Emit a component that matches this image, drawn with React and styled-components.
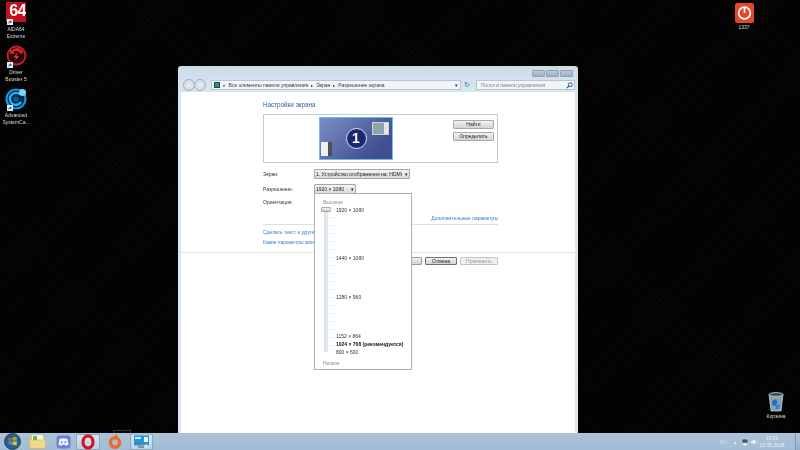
import React from 'react'
import styled, {createGlobalStyle} from 'styled-components'

const GlobalStyle = createGlobalStyle`
  html, body { margin: 0; padding: 0; background: #000; }
  body { font-family: "Liberation Sans", Arial, sans-serif; }
`

const Shortcut = () => (
  <svg width="6" height="6" viewBox="0 0 8 8" style={{position: 'absolute', left: 2, bottom: 0}}>
    <rect width="8" height="8" fill="#e8eef4" />
    <path d="M2 6.5V4.5Q2 3 4 3V1.5L6.8 3.8 4 6V4.5Q3 4.5 2 6.5Z" fill="#2a62c4" />
  </svg>
)

const Booster = () => (
  <svg width="21" height="21" viewBox="0 0 21 21">
    <circle cx="10.5" cy="10.5" r="9" fill="#2a0708" stroke="#c42227" strokeWidth="1.8" />
    <path d="M10.5 3a7.5 7.5 0 0 1 7 5l-3 1a4.5 4.5 0 0 0-7-2l1.8 1.8H4V4l1.8 1.8A7.5 7.5 0 0 1 10.5 3Z" fill="#d3262b" />
    <path d="M13 11l-4 5 1-3.5H7.5l4-5-1 3.5Z" fill="#e5353a" />
  </svg>
)

const SystemCare = () => (
  <svg width="22" height="22" viewBox="0 0 22 22">
    <circle cx="11" cy="11" r="9.5" fill="#04273f" stroke="#1598e2" strokeWidth="2.2" />
    <path d="M15 6.5A6 6 0 1 0 16 14" fill="none" stroke="#1fb4f5" strokeWidth="2.4" />
    <circle cx="11" cy="11" r="2.6" fill="#0c5f96" />
    <circle cx="17.5" cy="4.5" r="3.5" fill="#7bd4fb" />
  </svg>
)

const Power = () => (
  <svg width="19" height="20" viewBox="0 0 19 20">
    <rect width="19" height="20" rx="2" fill="#e2492b" />
    <circle cx="9.5" cy="10" r="5.8" fill="none" stroke="#fff" strokeWidth="1.7" />
    <path d="M9.5 4v6" stroke="#fff" strokeWidth="1.7" />
  </svg>
)

const Trash = () => (
  <svg width="16" height="20" viewBox="0 0 16 20">
    <path d="M1 2.5 3 19h10l2-16.5Z" fill="#8aa0ae" stroke="#c9d6dc" strokeWidth=".7" />
    <ellipse cx="8" cy="2.5" rx="7" ry="2" fill="#42525c" stroke="#d4dfe4" strokeWidth=".7" />
    <path d="M4 9l4-2 1.5 3-2 4-3-1Z" fill="#1f6fd0" />
    <path d="M9 12l3 1-1 4H7Z" fill="#2a86e6" />
  </svg>
)

const Orb = () => (
  <svg width="17" height="17" viewBox="0 0 17 17">
    <circle cx="8.5" cy="8.5" r="8" fill="#24608f" stroke="#163a57" strokeWidth=".8" />
    <path d="M3.8 5.5l4-1v3.4H4.4Z" fill="#e5472f" />
    <path d="M8.5 4.3l4-.6.5 3.9H8.5Z" fill="#73c13f" />
    <path d="M4.4 8.6h3.4v3.6l-3-1Z" fill="#3b95e0" />
    <path d="M8.5 8.4H13l-.4 4-4.1-.6Z" fill="#f3c02d" />
  </svg>
)

const Folder = () => (
  <svg width="17" height="15" viewBox="0 0 17 15">
    <path d="M1 2h5l1 1.5h9V14H1Z" fill="#e8c76a" />
    <rect x="3" y="1" width="11" height="8" fill="#f4f3e8" />
    <rect x="4" y="2" width="4" height="4" fill="#79b34e" />
    <path d="M0 6h17l-1 8.5H1Z" fill="#f0d88c" stroke="#c9a850" strokeWidth=".5" />
  </svg>
)

const Discord = () => (
  <svg width="15" height="14" viewBox="0 0 15 14">
    <rect x=".5" y=".5" width="14" height="13" rx="3" fill="#6f7fd8" />
    <path d="M3.5 4Q7.5 2.3 11.5 4L12.5 9.5Q11 10.7 9.7 10.8L9 9.8H6L5.3 10.8Q4 10.7 2.5 9.5Z" fill="#f2f4ff" />
    <circle cx="5.7" cy="7.2" r="1" fill="#6f7fd8" />
    <circle cx="9.3" cy="7.2" r="1" fill="#6f7fd8" />
  </svg>
)

const Opera = () => (
  <svg width="14" height="16" viewBox="0 0 14 16">
    <ellipse cx="7" cy="8" rx="5" ry="6" fill="none" stroke="#d5101f" strokeWidth="3.2" />
  </svg>
)

const Origin = () => (
  <svg width="14" height="16" viewBox="0 0 14 16">
    <circle cx="7" cy="8.5" r="4.6" fill="none" stroke="#ee6a27" strokeWidth="3.4" />
    <path d="M8 0 10 3 6 3Z" fill="#ee6a27" />
  </svg>
)

const DisplayIcon = () => (
  <svg width="17" height="15" viewBox="0 0 17 15">
    <rect x=".5" y="1" width="16" height="11" fill="#2a93d2" stroke="#dcebf4" strokeWidth=".8" />
    <rect x="2" y="3" width="6" height="2" fill="#c8ebff" />
    <rect x="11" y="3" width="4" height="5" fill="#e9f4fa" />
    <rect x="5" y="12" width="7" height="2" fill="#8a9298" />
    <circle cx="13" cy="12.5" r="2" fill="#dfe3e5" />
  </svg>
)

const App = () => {
  return (
    <>
      <GlobalStyle />
      <Screen>
        <Desktop>
          <IconColumn>
            <DesktopIcon>
              <IconArt><AidaBox>64</AidaBox><Shortcut /></IconArt>
              <IconLabel>AIDA64<br />Extreme</IconLabel>
            </DesktopIcon>
            <DesktopIcon>
              <IconArt><Booster /><Shortcut /></IconArt>
              <IconLabel>Driver<br />Booster 5</IconLabel>
            </DesktopIcon>
            <DesktopIcon>
              <IconArt><SystemCare /><Shortcut /></IconArt>
              <IconLabel>Advanced<br />SystemCa...</IconLabel>
            </DesktopIcon>
          </IconColumn>

          <FreeIcon $x={724} $y={3}>
            <Power />
            <IconLabel>1337</IconLabel>
          </FreeIcon>
          <FreeIcon $x={756} $y={392}>
            <Trash />
            <IconLabel>Корзина</IconLabel>
          </FreeIcon>

          <Explorer>
            <TitleBar>
              <WinButton /><WinButton /><WinButton />
            </TitleBar>
            <NavBar>
              <NavButtons>
                <NavCircle /><NavCircle />
              </NavButtons>
              <AddressBox>
                <AddressIcon />
                <Crumb>«</Crumb>
                <Crumb>Все элементы панели управления</Crumb>
                <Crumb $sep>▸</Crumb>
                <Crumb>Экран</Crumb>
                <Crumb $sep>▸</Crumb>
                <Crumb>Разрешение экрана</Crumb>
                <AddressArrow>▾</AddressArrow>
              </AddressBox>
              <Refresh>↻</Refresh>
              <SearchBox>
                <span>Поиск в панели управления</span>
                <svg width="7" height="7" viewBox="0 0 7 7">
                  <circle cx="4.3" cy="2.7" r="2" fill="none" stroke="#2b5f9e" strokeWidth="1" />
                  <path d="M3 4 .8 6.2" stroke="#2b5f9e" strokeWidth="1.2" />
                </svg>
              </SearchBox>
            </NavBar>

            <Content>
              <MainColumn>
                <Heading>Настройки экрана</Heading>
                <PreviewBox>
                  <MonitorArea>
                    <Monitor>
                      <MiniTop />
                      <MiniBottom />
                      <Badge>1</Badge>
                    </Monitor>
                  </MonitorArea>
                  <PreviewButtons>
                    <PreviewButton>Найти</PreviewButton>
                    <PreviewButton>Определить</PreviewButton>
                  </PreviewButtons>
                </PreviewBox>

                <FormRow $mt={6}>
                  <FormLabel>Экран:</FormLabel>
                  <Select $w={96}>1. Устройство отображения на: HDMI<Caret>▾</Caret></Select>
                </FormRow>
                <FormRow $mt={5}>
                  <FormLabel>Разрешение:</FormLabel>
                  <SelectWrap>
                    <Select $w={42}>1920 × 1080<Caret>▾</Caret></Select>
                    <Dropdown>
                      <EdgeLabel>Высокое</EdgeLabel>
                      <SliderArea>
                        <Track />
                        <Thumb />
                        <Ticks />
                        <Options>
                          <Option $mt={0}>1920 × 1080</Option>
                          <Option $mt={42}>1440 × 1080</Option>
                          <Option $mt={33}>1280 × 960</Option>
                          <Option $mt={33}>1152 × 864</Option>
                          <Option $mt={2} $bold>1024 × 768 (рекомендуется)</Option>
                          <Option $mt={2}>800 × 600</Option>
                        </Options>
                      </SliderArea>
                      <EdgeLabel $bottom>Низкое</EdgeLabel>
                    </Dropdown>
                  </SelectWrap>
                </FormRow>
                <FormRow $mt={3}>
                  <FormLabel>Ориентация:</FormLabel>
                </FormRow>

                <AdvancedLink>Дополнительные параметры</AdvancedLink>
                <Divider />
                <TextLink>Сделать текст и другие элементы больше или меньше</TextLink>
                <TextLink $mt={4}>Какие параметры монитора следует выбрать?</TextLink>
              </MainColumn>
              <Footer>
                <FooterButton $w={37}>ОК</FooterButton>
                <FooterButton $w={32} $strong>Отмена</FooterButton>
                <FooterButton $w={38} $disabled>Применить</FooterButton>
              </Footer>
            </Content>
          </Explorer>
          <HoverEdge />
        </Desktop>

        <Taskbar>
          <OrbSlot><Orb /></OrbSlot>
          <TaskSlot $w={26}><Folder /></TaskSlot>
          <TaskSlot $w={26}><Discord /></TaskSlot>
          <TaskSlot $w={24} $active><Opera /></TaskSlot>
          <TaskSlot $w={30}><Origin /></TaskSlot>
          <TaskSlot $w={23} $active><DisplayIcon /></TaskSlot>
          <Tray>
            <TrayText>RU</TrayText>
            <TrayGlyph>▴</TrayGlyph>
            <svg width="8" height="8" viewBox="0 0 8 8">
              <rect x="1" y="1" width="6" height="4" fill="#3f5565" stroke="#dde6ec" strokeWidth=".6" />
              <rect x="2.5" y="5.5" width="3" height="2" fill="#eef2f5" />
            </svg>
            <svg width="8" height="8" viewBox="0 0 8 8">
              <path d="M1 3h1.5L5 1v6L2.5 5H1Z" fill="#eef2f5" />
              <path d="M6 2.5Q7.2 4 6 5.5" fill="none" stroke="#eef2f5" strokeWidth=".7" />
            </svg>
            <Clock>19:21<br />13.09.2018</Clock>
          </Tray>
          <ShowDesktop />
        </Taskbar>
      </Screen>
    </>
  )
}

export default App

const Screen = styled.div`
  width: 800px;
  height: 450px;
  display: flex;
  flex-direction: column;
  overflow: hidden;
  background-color: #020202;
  background-image: repeating-linear-gradient(45deg, #060606 0 1px, transparent 1px 4px),
    repeating-linear-gradient(-45deg, #050505 0 1px, transparent 1px 5px);
  filter: blur(0.5px);
`
const Desktop = styled.div`
  flex: 1;
  min-height: 0;
  position: relative;
`
const IconColumn = styled.div`
  display: flex;
  flex-direction: column;
  width: 32px;
  padding-top: 2px;
`
const DesktopIcon = styled.div`
  height: 43px;
  display: flex;
  flex-direction: column;
  align-items: center;
`
const IconArt = styled.div`
  position: relative;
  width: 22px;
  height: 23px;
  display: flex;
  align-items: flex-start;
  justify-content: center;
`
const AidaBox = styled.div`
  width: 20px;
  height: 20px;
  background: #c1121c;
  color: #fff;
  font-size: 16px;
  font-weight: bold;
  line-height: 17px;
  letter-spacing: -0.5px;
  text-align: right;
  overflow: hidden;
`
const IconLabel = styled.div`
  margin-top: 1px;
  color: #dcdcdc;
  font-size: 5px;
  line-height: 6.5px;
  text-align: center;
  white-space: nowrap;
`
const FreeIcon = styled.div`
  position: absolute;
  left: ${p => p.$x}px;
  top: ${p => p.$y}px;
  width: 40px;
  display: flex;
  flex-direction: column;
  align-items: center;
`
const Explorer = styled.div`
  position: absolute;
  left: 178px;
  top: 66px;
  width: 400px;
  height: 367px;
  box-sizing: border-box;
  padding: 0 3px;
  display: flex;
  flex-direction: column;
  background: linear-gradient(#cbdce9, #d9e6f0 26px, #dde8f2);
  border-radius: 3px 3px 0 0;
`
const TitleBar = styled.div`
  height: 12px;
  display: flex;
  justify-content: flex-end;
  align-items: center;
  gap: 1px;
  padding: 3px 2px 0 0;
  box-sizing: border-box;
`
const WinButton = styled.div`
  width: 11px;
  height: 5px;
  border-radius: 1px;
  background: linear-gradient(#bccad6, #9dafbe);
  border: 1px solid #8fa2b1;
`
const NavBar = styled.div`
  height: 14px;
  display: flex;
  align-items: center;
`
const NavButtons = styled.div`
  width: 26px;
  display: flex;
  padding-left: 2px;
  box-sizing: border-box;
`
const NavCircle = styled.div`
  width: 10px;
  height: 10px;
  margin-right: -1px;
  border-radius: 50%;
  border: 1px solid #9fafbc;
  background: radial-gradient(#e8eef2, #cdd7df);
`
const AddressBox = styled.div`
  width: 252px;
  height: 10px;
  box-sizing: border-box;
  margin-left: 4px;
  padding: 0 2px;
  display: flex;
  align-items: center;
  gap: 3px;
  background: #f0f5f9;
  border: 1px solid #b7c5d1;
  color: #2c3338;
  font-size: 5px;
  white-space: nowrap;
`
const AddressIcon = styled.div`
  width: 6px;
  height: 6px;
  background: linear-gradient(135deg, #2c7fd0 50%, #3c9a3c 50%);
  border: 1px solid #24425e;
  box-sizing: border-box;
`
const Crumb = styled.span`
  font-size: ${p => (p.$sep ? 4 : 5)}px;
  color: ${p => (p.$sep ? '#111' : '#353b40')};
`
const AddressArrow = styled.span`
  margin-left: auto;
  font-size: 5px;
  color: #223;
`
const Refresh = styled.div`
  width: 13px;
  text-align: center;
  color: #2f6ea5;
  font-size: 7px;
  line-height: 10px;
`
const SearchBox = styled.div`
  width: 100px;
  height: 10px;
  margin-left: 2px;
  box-sizing: border-box;
  padding: 0 1px 0 4px;
  display: flex;
  align-items: center;
  justify-content: space-between;
  background: #f0f5f9;
  border: 1px solid #b7c5d1;
  color: #7d878f;
  font-size: 5px;
  font-style: italic;
  white-space: nowrap;
`
const Content = styled.div`
  flex: 1;
  background: #fff;
  display: flex;
  flex-direction: column;
`
const MainColumn = styled.div`
  width: 235px;
  margin-left: 82px;
  height: 160px;
  padding-top: 9px;
  box-sizing: border-box;
`
const Heading = styled.div`
  color: #2a5db0;
  font-size: 6.3px;
  line-height: 8px;
  height: 9px;
`
const PreviewBox = styled.div`
  height: 49px;
  margin-top: 4px;
  box-sizing: border-box;
  border: 1px solid #c9c9c9;
  display: flex;
`
const MonitorArea = styled.div`
  flex: 1;
  display: flex;
  justify-content: center;
  padding-top: 2px;
  padding-right: 5px;
`
const Monitor = styled.div`
  position: relative;
  width: 74px;
  height: 43px;
  box-sizing: border-box;
  border: 1px solid #6cbcf0;
  background: linear-gradient(135deg, #7b8fc4, #3f4f90 80%);
  display: flex;
  align-items: center;
  justify-content: center;
`
const MiniTop = styled.div`
  position: absolute;
  right: 3px;
  top: 4px;
  width: 17px;
  height: 13px;
  background: linear-gradient(90deg, #8fa5ad 70%, #e4e8ea 70%);
  border: 1px solid #c8d2d8;
  box-sizing: border-box;
`
const MiniBottom = styled.div`
  position: absolute;
  left: 1px;
  bottom: 3px;
  width: 11px;
  height: 14px;
  background: linear-gradient(90deg, #eef0f0 60%, #4c5058 60%);
`
const Badge = styled.div`
  width: 21px;
  height: 21px;
  box-sizing: border-box;
  border: 1.5px solid #dfe6f5;
  border-radius: 50%;
  background: #1c2872;
  color: #fff;
  font-size: 14px;
  font-weight: bold;
  line-height: 18px;
  text-align: center;
`
const PreviewButtons = styled.div`
  width: 44px;
  padding-top: 5px;
  display: flex;
  flex-direction: column;
  gap: 3px;
`
const PreviewButton = styled.div`
  width: 41px;
  height: 9px;
  box-sizing: border-box;
  border: 1px solid #a9a9a9;
  border-radius: 1px;
  background: linear-gradient(#f2f2f2, #d3d3d3);
  color: #222;
  font-size: 5px;
  line-height: 7px;
  text-align: center;
`
const FormRow = styled.div`
  display: flex;
  align-items: center;
  height: 10px;
  margin-top: ${p => p.$mt}px;
`
const FormLabel = styled.div`
  width: 51px;
  margin-top: -1px;
  color: #333;
  font-size: 5px;
`
const SelectWrap = styled.div`
  position: relative;
`
const Select = styled.div`
  width: ${p => p.$w}px;
  height: 10px;
  box-sizing: border-box;
  padding: 0 1px;
  display: flex;
  align-items: center;
  justify-content: space-between;
  border: 1px solid #a5a5a5;
  border-radius: 1px;
  background: linear-gradient(#f4f4f4, #d9d9d9);
  color: #222;
  font-size: 5px;
  white-space: nowrap;
`
const Caret = styled.span`
  font-size: 5px;
  color: #111;
`
const Dropdown = styled.div`
  position: absolute;
  left: 0;
  top: 9px;
  width: 98px;
  height: 177px;
  box-sizing: border-box;
  padding: 5px 0 0 8px;
  background: #fff;
  border: 1px solid #b0b0b0;
  z-index: 2;
`
const EdgeLabel = styled.div`
  color: #8b8b8b;
  font-size: 5px;
  line-height: 6px;
  margin-top: ${p => (p.$bottom ? 7 : 0)}px;
`
const SliderArea = styled.div`
  position: relative;
  height: 146px;
  margin-top: 2px;
`
const Track = styled.div`
  position: absolute;
  left: 1px;
  top: 2px;
  width: 4px;
  height: 143px;
  background: linear-gradient(90deg, #d5e2ee, #e6eef5);
`
const Thumb = styled.div`
  position: absolute;
  left: -2px;
  top: 0;
  width: 8px;
  height: 3px;
  background: linear-gradient(#f2f2f2, #c8c8c8);
  border: 1px solid #a8a8a8;
  border-radius: 1px;
`
const Ticks = styled.div`
  position: absolute;
  left: 6px;
  top: 2px;
  width: 6px;
  height: 142px;
  background: repeating-linear-gradient(#eeeeee 0 1px, transparent 1px 8px);
`
const Options = styled.div`
  position: absolute;
  left: 13px;
  top: 0;
  display: flex;
  flex-direction: column;
`
const Option = styled.div`
  margin-top: ${p => p.$mt}px;
  height: 6px;
  color: ${p => (p.$bold ? '#111' : '#333')};
  font-size: 5px;
  font-weight: ${p => (p.$bold ? 'bold' : 'normal')};
  line-height: 6px;
  white-space: nowrap;
`
const AdvancedLink = styled.div`
  margin-top: 7px;
  height: 8px;
  color: #3a7cc8;
  font-size: 5px;
  line-height: 8px;
  text-align: right;
`
const Divider = styled.div`
  height: 1px;
  margin-top: 2px;
  background: #dedede;
`
const TextLink = styled.div`
  margin-top: ${p => p.$mt ?? 4}px;
  height: 6px;
  color: #3a7cc8;
  font-size: 5px;
  line-height: 6px;
  white-space: nowrap;
`
const Footer = styled.div`
  width: 235px;
  margin-left: 82px;
  padding-top: 5px;
  display: flex;
  justify-content: flex-end;
  gap: 3px;
  position: relative;
  &::before {
    content: '';
    position: absolute;
    left: -82px;
    right: -77px;
    top: 0;
    height: 1px;
    background: #e2e2e2;
  }
`
const FooterButton = styled.div`
  width: ${p => p.$w}px;
  height: 8px;
  box-sizing: border-box;
  border: 1px solid ${p => (p.$disabled ? '#c4c4c4' : p.$strong ? '#6f6f6f' : '#9a9a9a')};
  border-radius: 1px;
  background: ${p => (p.$disabled ? '#efefef' : 'linear-gradient(#f2f2f2, #d3d3d3)')};
  color: ${p => (p.$disabled ? '#9a9a9a' : '#222')};
  font-size: 5px;
  line-height: 6px;
  text-align: center;
`
const HoverEdge = styled.div`
  position: absolute;
  left: 113px;
  top: 430px;
  width: 18px;
  height: 3px;
  border: 1px solid #333;
  border-bottom: none;
  box-sizing: border-box;
`
const Taskbar = styled.div`
  height: 17px;
  display: flex;
  align-items: center;
  background: linear-gradient(#abc4da, #a1bcd4);
  box-sizing: border-box;
`
const OrbSlot = styled.div`
  width: 24px;
  display: flex;
  justify-content: center;
`
const TaskSlot = styled.div`
  width: ${p => p.$w}px;
  height: 16px;
  display: flex;
  align-items: center;
  justify-content: center;
  box-sizing: border-box;
  ${p => p.$active && `
    background: linear-gradient(#d6e3ee, #b9cfe1);
    border: 1px solid #8ea7bb;
  `}
`
const Tray = styled.div`
  margin-left: auto;
  display: flex;
  align-items: center;
  gap: 1px;
  color: #eef3f7;
  font-size: 5px;
`
const TrayText = styled.span`
  margin-right: 6px;
  color: #d3dfe9;
`
const TrayGlyph = styled.span`
  margin-right: 3px;
`
const Clock = styled.div`
  width: 26px;
  text-align: center;
  line-height: 7px;
`
const ShowDesktop = styled.div`
  width: 5px;
  height: 17px;
  margin-left: 10px;
  background: linear-gradient(#b3c9dc, #93aec6);
  border-left: 1px solid #7f98ad;
  box-sizing: border-box;
`
